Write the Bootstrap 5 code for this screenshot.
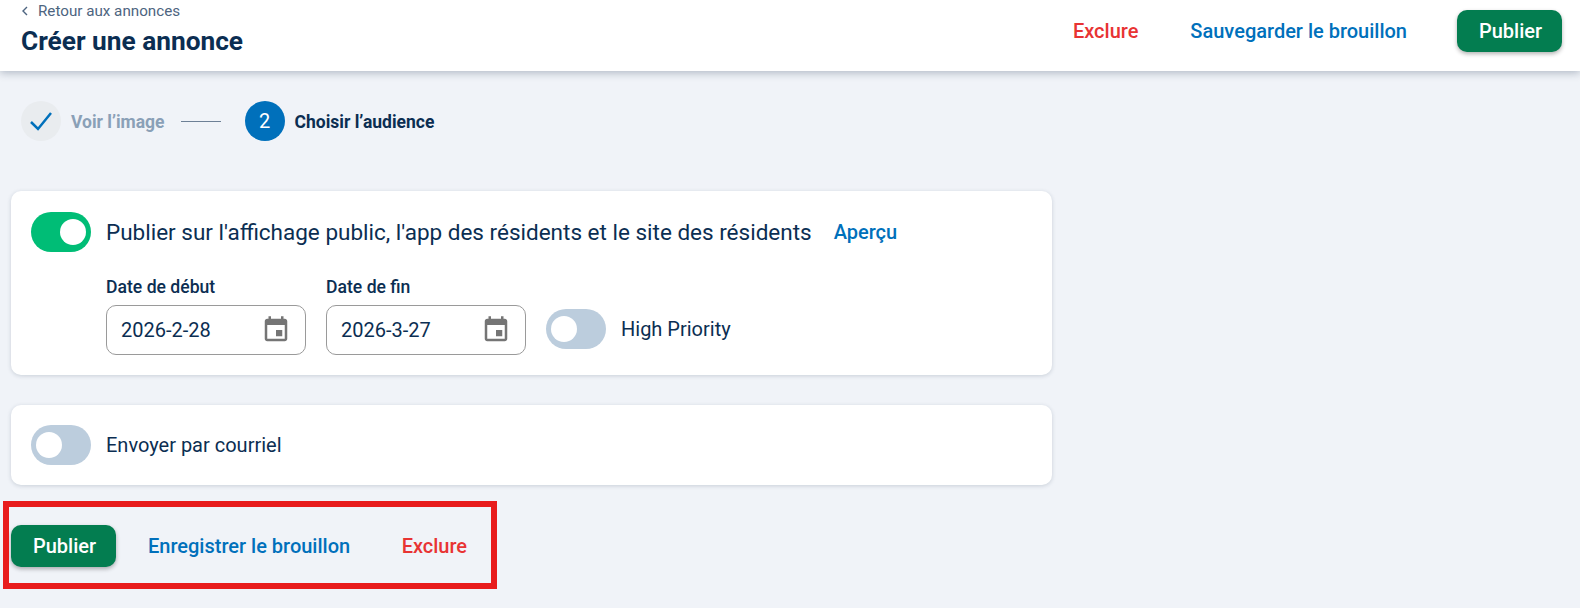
<!DOCTYPE html>
<html lang="fr">
<head>
<meta charset="utf-8">
<title>Créer une annonce</title>
<link href="https://cdn.jsdelivr.net/npm/bootstrap@5.3.0/dist/css/bootstrap.min.css" rel="stylesheet">
<style>
html,body{height:100%;}
body{background:#f0f3f8;font-family:Roboto,"Liberation Sans",sans-serif;color:#0b2e52;overflow:hidden;position:relative;}
.top-bar{background:#fff;height:71px;padding:0 18px 0 21px;box-shadow:0 2px 8px rgba(30,50,80,.3);}
.back-link{font-size:15.2px;line-height:16px;color:#4d6480;margin-top:3px;text-decoration:none;}
.back-ico{margin-right:9px;}
.page-title{font-size:26.25px;font-weight:700;line-height:30px;margin:7px 0 0;color:#0b2e52;}
.act{font-size:20px;font-weight:500;text-decoration:none;line-height:24px;}
.act-red{color:#e83333;}
.act-blue{color:#0070bb;}
.top-acts{margin-top:10px;height:42px;}
.act-mid{margin:0 50px 0 52px;}
.pub-btn{background:#037d50;border:0;color:#fff;font-size:20px;font-weight:500;width:105px;height:42px;border-radius:10px;box-shadow:0 2px 4px rgba(0,0,0,.3);padding:0 0 0 2px;}
.step-row{padding:30px 0 0 21px;height:120px;}
.step-dot{width:40px;height:40px;border-radius:50%;}
.step-done{background:#e9ecef;}
.step-now{background:#0070bb;color:#fff;font-size:20px;margin-left:24px;}
.step-lbl{font-size:17.5px;font-weight:700;margin-left:10px;padding-top:2px;}
.step-mute{color:#8aa0b7;}
.step-line{width:40px;height:1px;background:#6d8096;margin-left:16px;}
.panel{background:#fff;width:1041px;margin-left:11px;border-radius:10px;box-shadow:0 1px 4px rgba(30,50,80,.18);padding:20px;}
.panel-one{padding-top:21px;}
.panel-two{margin-top:30px;}
.tgl{width:60px;height:40px;border-radius:20px;background:#bccddd;position:relative;flex:none;display:block;}
.tgl::after{content:"";position:absolute;top:7px;left:5px;width:26px;height:26px;border-radius:50%;background:#fff;}
.tgl-on{background:#00bd76;}
.tgl-on::after{left:auto;right:5px;}
.main-lbl{font-size:22.5px;margin-left:15px;line-height:26px;}
.preview{margin-left:22px;}
.side-lbl{font-size:20px;margin-left:15px;}
.date-area{margin:24px 0 0 75px;gap:20px;}
.date-lbl{font-size:17.6px;font-weight:500;line-height:22px;margin-bottom:7px;display:block;}
.date-box{width:200px;height:50px;border:1px solid #9a9a9a;border-radius:10px;font-size:20px;color:#0b2e52;padding:0 14px;background:#fff;}
.date-val{padding-bottom:1px;}
.date-flag{height:50px;margin-bottom:1px;}
.foot-row{margin:40px 0 0 11px;}
.foot-row .act{margin-left:32px;}
.foot-row .act-red{margin-left:51.5px;}
.red-frame{position:absolute;left:3px;top:501px;width:494px;height:88px;border:6px solid #e81c1c;pointer-events:none;}
</style>
</head>
<body>
<header class="top-bar d-flex justify-content-between align-items-start">
  <div>
    <a href="#" class="back-link d-flex align-items-center">
      <svg width="8" height="10" viewBox="0 0 8 10" class="back-ico" aria-hidden="true"><path d="M6 1 2 5l4 4" fill="none" stroke="#4d6480" stroke-width="1.4"/></svg>
      Retour aux annonces
    </a>
    <h1 class="page-title">Créer une annonce</h1>
  </div>
  <div class="top-acts d-flex align-items-center">
    <a href="#" class="act act-red">Exclure</a>
    <a href="#" class="act act-blue act-mid">Sauvegarder le brouillon</a>
    <button type="button" class="btn pub-btn">Publier</button>
  </div>
</header>

<div class="step-row d-flex align-items-start">
  <div class="d-flex align-items-center">
    <span class="step-dot step-done d-flex align-items-center justify-content-center">
      <svg width="24" height="24" viewBox="0 0 24 24" aria-hidden="true"><path d="M2 13l7 7L22 4" fill="none" stroke="#0070bb" stroke-width="2.5"/></svg>
    </span>
    <span class="step-lbl step-mute">Voir l’image</span>
    <span class="step-line"></span>
    <span class="step-dot step-now d-flex align-items-center justify-content-center">2</span>
    <span class="step-lbl">Choisir l’audience</span>
  </div>
</div>

<section class="panel panel-one">
  <div class="d-flex align-items-center">
    <span class="tgl tgl-on"></span>
    <span class="main-lbl">Publier sur l'affichage public, l'app des résidents et le site des résidents</span>
    <a href="#" class="act act-blue preview">Aperçu</a>
  </div>
  <div class="date-area d-flex align-items-end">
    <div>
      <span class="date-lbl">Date de début</span>
      <div class="date-box d-flex align-items-center justify-content-between">
        <span class="date-val">2026-2-28</span>
        <svg width="30" height="30" viewBox="0 0 24 24" fill="#757575" aria-hidden="true"><path d="M17 12h-5v5h5v-5zM16 1v2H8V1H6v2H5c-1.11 0-1.99.9-1.99 2L3 19c0 1.1.89 2 2 2h14c1.1 0 2-.9 2-2V5c0-1.1-.9-2-2-2h-1V1h-2zm3 18H5V8h14v11z"/></svg>
      </div>
    </div>
    <div>
      <span class="date-lbl">Date de fin</span>
      <div class="date-box d-flex align-items-center justify-content-between">
        <span class="date-val">2026-3-27</span>
        <svg width="30" height="30" viewBox="0 0 24 24" fill="#757575" aria-hidden="true"><path d="M17 12h-5v5h5v-5zM16 1v2H8V1H6v2H5c-1.11 0-1.99.9-1.99 2L3 19c0 1.1.89 2 2 2h14c1.1 0 2-.9 2-2V5c0-1.1-.9-2-2-2h-1V1h-2zm3 18H5V8h14v11z"/></svg>
      </div>
    </div>
    <div class="date-flag d-flex align-items-center">
      <span class="tgl"></span>
      <span class="side-lbl">High Priority</span>
    </div>
  </div>
</section>

<section class="panel panel-two d-flex align-items-center">
  <span class="tgl"></span>
  <span class="side-lbl">Envoyer par courriel</span>
</section>

<div class="foot-row d-flex align-items-center">
  <button type="button" class="btn pub-btn">Publier</button>
  <a href="#" class="act act-blue">Enregistrer le brouillon</a>
  <a href="#" class="act act-red">Exclure</a>
</div>
<div class="red-frame"></div>
</body>
</html>
